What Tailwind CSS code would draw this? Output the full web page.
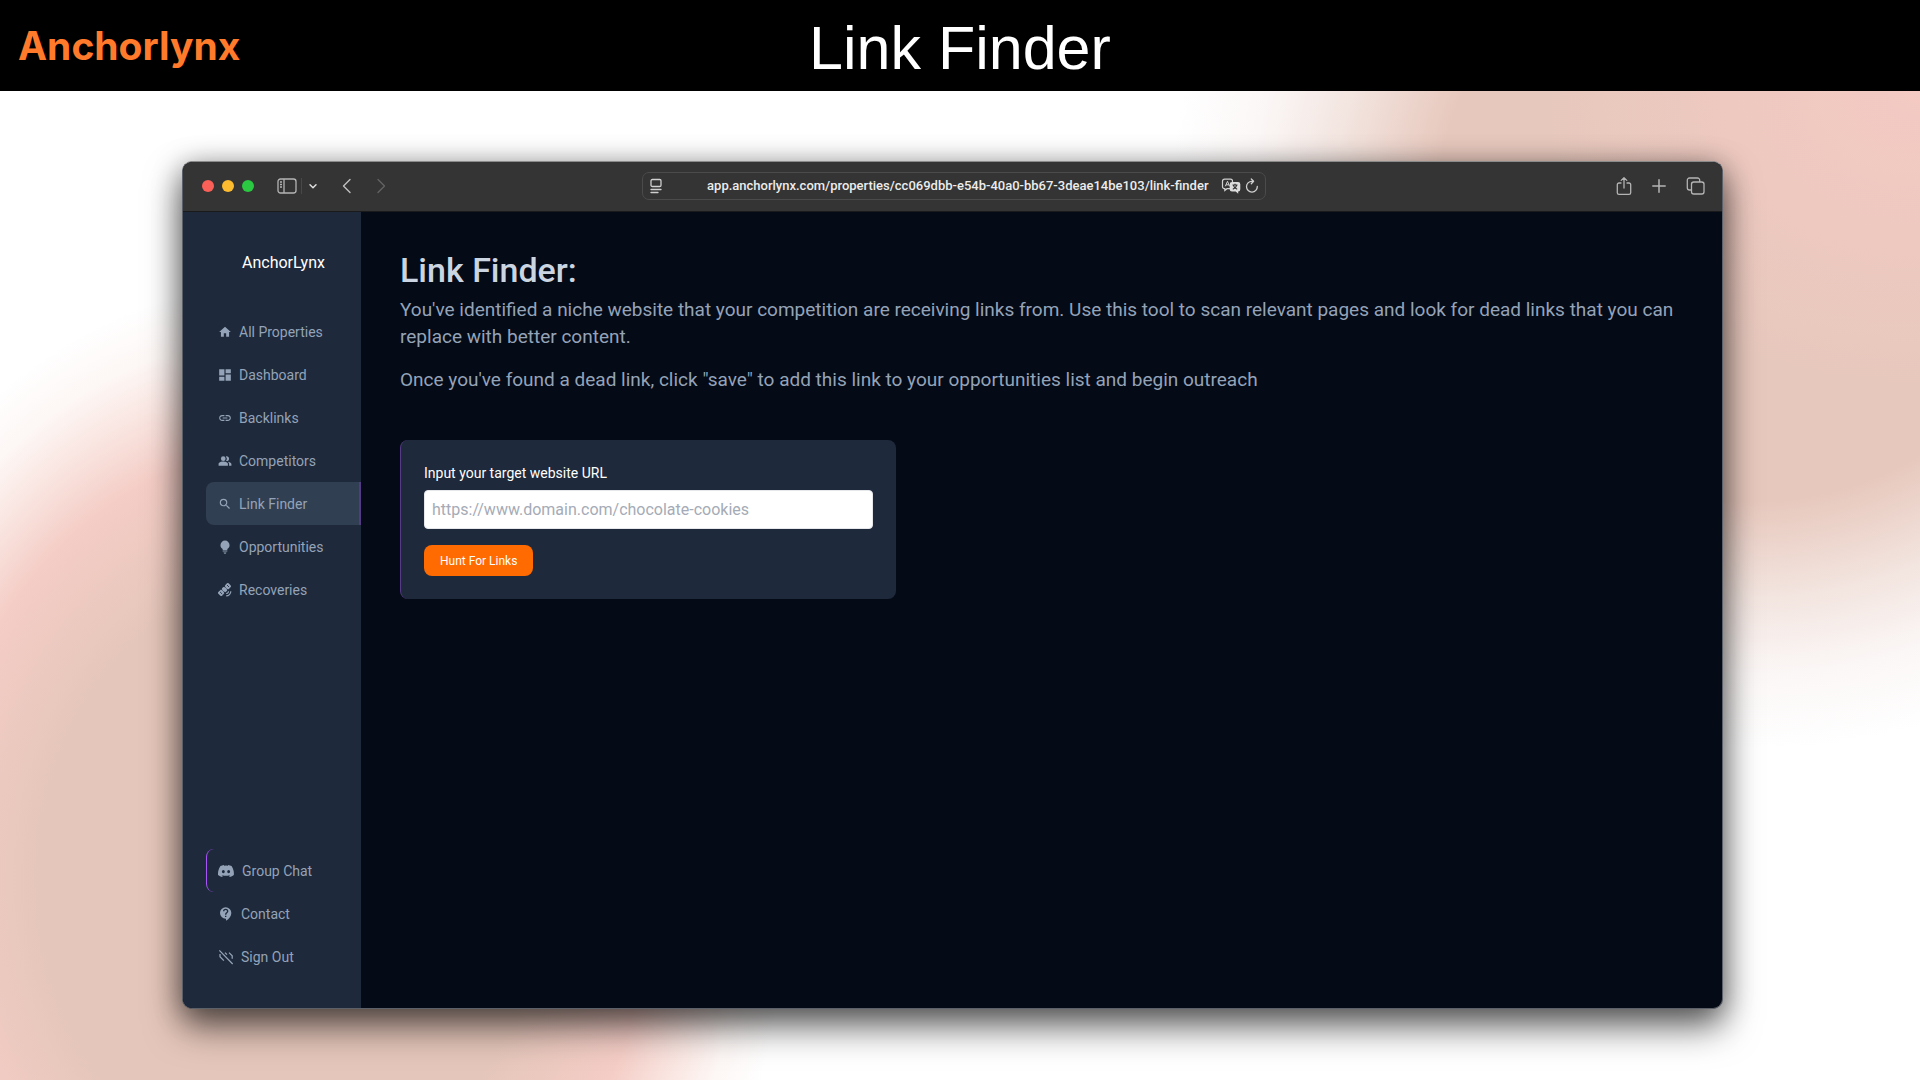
<!DOCTYPE html>
<html lang="en">
<head>
<meta charset="utf-8">
<meta name="viewport" content="width=device-width, initial-scale=1">
<title>Anchorlynx – Link Finder</title>
<script src="https://cdn.jsdelivr.net/npm/@tailwindcss/browser@4"></script>
</head>
<body class="flex min-h-screen flex-col bg-white font-['Roboto',sans-serif]">

<header class="grid h-[91px] grid-cols-[1fr_auto_1fr] items-center bg-black px-[18px]">
  <a href="#" class="font-['Inter',sans-serif] text-[39px] leading-[48px] font-bold text-[#ff7b2b]">Anchorlynx</a>
  <h1 class="pt-1 font-['Liberation_Sans',sans-serif] text-[61px] leading-[72px] text-white">Link Finder</h1>
</header>

<div class="flex flex-1 flex-col bg-[radial-gradient(ellipse_380px_300px_at_100%_0%,#f4cac3_0,#f4cac300_100%),radial-gradient(ellipse_580px_540px_at_1750px_119px,#e7c8bd_0,#e7c8bd_54%,#f3e5e0_72%,#fbf7f6_86%,#ffffff00_100%),radial-gradient(ellipse_500px_600px_at_290px_789px,#e5c6ba_0,#e5c6ba_50%,#f4cdc6_72%,#f9e2dd_81%,#fdf7f5_91%,#ffffff00_100%)] pt-[70px] pr-[197px] pb-[71px] pl-[182px]">
  <section class="flex flex-1 flex-col overflow-hidden rounded-[10px] border border-[#5c6068] border-t-[#8b8b8b] bg-[#040a16] shadow-[0_18px_36px_rgba(0,0,0,0.55),0_4px_28px_rgba(0,0,0,0.35)]">

    <!-- Browser toolbar -->
    <div class="flex h-[50px] shrink-0 items-center border-b border-[#1a1a1c] bg-[#343434] pr-[17px] pb-0.5 pl-[19px] text-[#b4b4b4]">
      <div class="flex flex-1 items-center">
        <div class="flex gap-2">
          <span class="size-3 rounded-full bg-[#fb6058]"></span>
          <span class="size-3 rounded-full bg-[#fdbc2f]"></span>
          <span class="size-3 rounded-full bg-[#2bc841]"></span>
        </div>
        <button type="button" aria-label="Show sidebar" class="ml-[23px]">
          <svg class="h-4 w-5" viewBox="0 0 20 16" fill="none" stroke="currentColor" stroke-width="1.3"><rect x="1" y="1" width="18" height="14" rx="2.5"/><path d="M7 1v14M3 4h2M3 6.500h2M3 9h2"/></svg>
        </button>
        <span class="ml-1 h-4 w-px bg-[#484848]"></span>
        <button type="button" aria-label="Tab groups" class="ml-1.5">
          <svg class="h-3 w-2.5" viewBox="0 0 10 12" fill="none" stroke="#dcdcdc" stroke-width="1.500" stroke-linecap="round" stroke-linejoin="round"><path d="M2 4.800l3 3 3-3"/></svg>
        </button>
        <button type="button" aria-label="Back" class="ml-[23px]">
          <svg class="h-4 w-3" viewBox="0 0 12 16" fill="none" stroke="#c0c0c0" stroke-width="1.400" stroke-linecap="round" stroke-linejoin="round"><path d="M9 1.500L2.500 8 9 14.500"/></svg>
        </button>
        <button type="button" aria-label="Forward" class="ml-[23px]">
          <svg class="h-4 w-3" viewBox="0 0 12 16" fill="none" stroke="#626262" stroke-width="1.400" stroke-linecap="round" stroke-linejoin="round"><path d="M2 1.500L8.500 8 2 14.500"/></svg>
        </button>
      </div>

      <div class="flex h-7 w-[624px] items-center rounded-[7px] border border-[#4b4b4b] px-1.5 text-[#d0d0d0]">
        <svg class="h-4 w-[14px] shrink-0" viewBox="0 0 14 16" fill="none" stroke="currentColor" stroke-width="1.300" stroke-linecap="round"><rect x="2" y="1.500" width="10" height="7" rx="1.300"/><path d="M2 11.500h10M2 14.500h7"/></svg>
        <input type="text" aria-label="Address" value="app.anchorlynx.com/properties/cc069dbb-e54b-40a0-bb67-3deae14be103/link-finder" class="min-w-0 flex-1 bg-transparent pr-3 text-right text-[13px] leading-5 font-medium text-[#ececec] outline-none">
        <button type="button" aria-label="Translate">
          <svg class="h-4 w-5" viewBox="0 0 20 16"><path d="M3.500 1.200h6a2 2 0 0 1 2 2v5.500a2 2 0 0 1-2 2H6l-2.200 1.800v-1.800h-.3a2 2 0 0 1-2-2V3.200a2 2 0 0 1 2-2z" fill="none" stroke="#d0d0d0" stroke-width="1.200"/><path d="M4.300 8.300l2.200-5 2.100 5M5 6.800h3" fill="none" stroke="#d0d0d0"/><path d="M11 4h6a2.300 2.300 0 0 1 2.300 2.300v5a2.300 2.300 0 0 1-2.100 2.300v2.100l-2.500-2.100H11a2.300 2.300 0 0 1-2.300-2.300v-5A2.300 2.300 0 0 1 11 4z" fill="#dcdcdc"/><path d="M11.500 7h5M14 5.800V7M15.800 7c-.5 2-2 3.500-4 4.300M12.300 7.200c.5 2 1.800 3.400 3.900 4.100" fill="none" stroke="#343434" stroke-width="1.100"/></svg>
        </button>
        <button type="button" aria-label="Reload" class="ml-1">
          <svg class="h-4 w-[14px]" viewBox="0 0 14 16" fill="none" stroke="currentColor" stroke-width="1.300" stroke-linecap="round" stroke-linejoin="round"><path d="M12.300 8.500a5.400 5.400 0 1 1-5.400-5.200h1.300M6.300 1l2.300 2.300-2.300 2.400"/></svg>
        </button>
      </div>

      <div class="flex flex-1 items-center justify-end gap-[19px]">
        <button type="button" aria-label="Share"><svg class="h-5 w-4" viewBox="0 0 16 20" fill="none" stroke="currentColor" stroke-width="1.300" stroke-linecap="round" stroke-linejoin="round"><path d="M5 7H3a1.700 1.700 0 0 0-1.700 1.700v8A1.700 1.700 0 0 0 3 18.400h10a1.700 1.700 0 0 0 1.700-1.700v-8A1.700 1.700 0 0 0 13 7h-2M8 12V1.800M5.200 4.400L8 1.600l2.800 2.800"/></svg></button>
        <button type="button" aria-label="New tab"><svg class="size-4" viewBox="0 0 16 16" fill="none" stroke="currentColor" stroke-width="1.500" stroke-linecap="round"><path d="M8 1.800v12.400M1.800 8h12.400"/></svg></button>
        <button type="button" aria-label="Tab overview"><svg class="h-5 w-[19px]" viewBox="0 0 19 20" fill="none" stroke="currentColor" stroke-width="1.300"><rect x="5.500" y="6" width="12.500" height="12" rx="2.200"/><path d="M5.500 14H3.500A2.200 2.200 0 0 1 1.300 11.800V4.200A2.200 2.200 0 0 1 3.500 2h8a2.200 2.200 0 0 1 2.200 2.200V6"/></svg></button>
      </div>
    </div>

    <div class="flex flex-1">
      <!-- Sidebar -->
      <aside class="flex w-[178px] shrink-0 flex-col bg-[#1e293b] pt-[39px] pb-[30px] text-sm text-[#94a3b8]">
        <a href="#" class="pl-[59px] text-base leading-6 text-white">AnchorLynx</a>
        <nav aria-label="Main" class="mt-[35px] flex flex-col pl-[23px]">
          <a href="#" class="flex h-[43px] items-center gap-[7px] pl-3">
            <svg class="size-[14px]" viewBox="0 0 24 24" fill="currentColor"><path d="M10 20v-6h4v6h5v-8h3L12 3 2 12h3v8z"/></svg>All Properties</a>
          <a href="#" class="flex h-[43px] items-center gap-[7px] pl-3">
            <svg class="size-[14px]" viewBox="0 0 24 24" fill="currentColor"><path d="M2 13h9V2H2v11zm0 9h9v-7H2v7zm11 0h9V11h-9v11zm0-20v7h9V2h-9z"/></svg>Dashboard</a>
          <a href="#" class="flex h-[43px] items-center gap-[7px] pl-3">
            <svg class="size-[14px]" viewBox="0 0 24 24" fill="currentColor"><path d="M3.900 12c0-1.710 1.390-3.100 3.100-3.100h4V7H7c-2.760 0-5 2.240-5 5s2.240 5 5 5h4v-1.900H7c-1.710 0-3.100-1.390-3.100-3.100zM8 13h8v-2H8v2zm9-6h-4v1.900h4c1.710 0 3.100 1.390 3.100 3.100s-1.390 3.100-3.100 3.100h-4V17h4c2.760 0 5-2.240 5-5s-2.240-5-5-5z"/></svg>Backlinks</a>
          <a href="#" class="flex h-[43px] items-center gap-[7px] pl-3">
            <svg class="size-[14px]" viewBox="0 0 24 24" fill="currentColor"><path d="M16.670 13.130C18.040 14.060 19 15.320 19 17v3h4v-3c0-2.180-3.570-3.470-6.330-3.870z"/><circle cx="9" cy="8" r="4"/><path d="M15 12c2.210 0 4-1.790 4-4s-1.790-4-4-4c-.470 0-.910.100-1.330.240a5.980 5.980 0 0 1 0 7.520c.420.140.860.240 1.330.240zM9 13c-2.670 0-8 1.340-8 4v3h16v-3c0-2.660-5.330-4-8-4z"/></svg>Competitors</a>
          <a href="#" aria-current="page" class="flex h-[43px] items-center gap-[7px] rounded-l-lg border-r-2 border-[#553a86] bg-[#334155]/90 pl-3">
            <svg class="size-[14px]" viewBox="0 0 24 24" fill="currentColor"><path d="M15.500 14h-.790l-.280-.270A6.471 6.471 0 0 0 16 9.500 6.500 6.500 0 1 0 9.500 16c1.610 0 3.090-.590 4.230-1.570l.270.280v.790l5 4.990L20.490 19l-4.990-5zm-6 0C7.010 14 5 11.990 5 9.500S7.010 5 9.500 5 14 7.010 14 9.500 11.990 14 9.500 14z"/></svg>Link Finder</a>
          <a href="#" class="flex h-[43px] items-center gap-[7px] pl-3">
            <svg class="size-[14px]" viewBox="0 0 24 24" fill="currentColor"><path d="M12 1a7.800 7.800 0 0 0-7.800 7.800c0 3 1.600 5 3.800 6.500V18h8v-2.700c2.200-1.500 3.800-3.500 3.800-6.500A7.800 7.800 0 0 0 12 1zM8 19.500h8v1.200H8zM9.500 21.500h5A2.500 2.500 0 0 1 12 23.500a2.500 2.500 0 0 1-2.500-2z"/></svg>Opportunities</a>
          <a href="#" class="flex h-[43px] items-center gap-[7px] pl-3">
            <svg class="size-[14px]" viewBox="0 0 24 24" fill="currentColor"><path d="M21 14h2a9 9 0 0 1-9 9v-2c3.870 0 7-3.130 7-7zm-7 3v2c2.760 0 5-2.240 5-5h-2c0 1.660-1.340 3-3 3zM18.260.590l3.540 3.540c.780.780.780 2.050 0 2.830l-3.180 3.180c-.780.780-2.050.780-2.830 0l-1.240-1.240-.710.700 1.240 1.240c.780.780.780 2.050 0 2.830l-1.410 1.410c-.780.780-2.050.780-2.830 0L9.600 13.840l-.710.710 1.240 1.240c.780.780.780 2.050 0 2.830L6.950 21.800c-.780.780-2.050.780-2.830 0L.580 18.260c-.780-.780-.780-2.050 0-2.830l3.180-3.180c.780-.780 2.050-.780 2.830 0l1.240 1.240.710-.710L7.300 11.540c-.780-.780-.780-2.050 0-2.830L8.720 7.300c.780-.780 2.050-.780 2.830 0l1.240 1.240.710-.710-1.240-1.240c-.780-.780-.780-2.050 0-2.830L15.430.580a2.010 2.010 0 0 1 2.830.010z"/><path d="M3.500 15.300l3.600 3.600M15.400 3.400L19 7" stroke="#1e293b" stroke-width="1.500"/></svg>Recoveries</a>
        </nav>
        <nav aria-label="Support" class="mt-auto flex flex-col pl-[23px]">
          <a href="#" class="flex h-[43px] items-center gap-2 rounded-l-lg border-l border-[#a855f7] pl-[11px]">
            <svg class="size-4" viewBox="0 0 24 24" fill="currentColor"><path d="M20.317 4.370a19.790 19.790 0 0 0-4.885-1.515c-.211.375-.457.880-.627 1.280a18.270 18.270 0 0 0-5.487 0c-.170-.400-.420-.905-.633-1.280A19.740 19.740 0 0 0 3.677 4.370C.533 9.046-.320 13.580.100 18.058a19.900 19.900 0 0 0 5.993 3.030c.485-.660.916-1.362 1.226-1.994a13.100 13.100 0 0 1-1.872-.892l.450-.350c3.928 1.793 8.180 1.793 12.062 0l.450.350c-.600.350-1.220.645-1.873.892.360.700.773 1.364 1.225 1.994a19.840 19.840 0 0 0 6.002-3.030c.500-5.177-.838-9.674-3.446-13.688zM8.020 15.330c-1.183 0-2.157-1.085-2.157-2.419s.955-2.419 2.157-2.419c1.210 0 2.176 1.095 2.157 2.419 0 1.334-.956 2.419-2.157 2.419zm7.975 0c-1.183 0-2.157-1.085-2.157-2.419s.955-2.419 2.157-2.419c1.210 0 2.176 1.095 2.157 2.419 0 1.334-.946 2.419-2.157 2.419z"/></svg>Group Chat</a>
          <a href="#" class="flex h-[43px] items-center gap-[7px] pl-3">
            <svg class="size-4" viewBox="0 0 24 24" fill="currentColor"><path fill-rule="evenodd" d="M11.500 2a8.500 8.500 0 0 0 0 17h.5v3c4.860-2.340 8-7 8-11.500A8.500 8.500 0 0 0 11.500 2zm1 14.500h-2v-2h2zm0-3.500h-2c0-3.250 3-3 3-5a2 2 0 1 0-4 0h-2a4 4 0 1 1 8 0c0 2.500-3 2.750-3 5z"/></svg>Contact</a>
          <a href="#" class="flex h-[43px] items-center gap-[7px] pl-3">
            <svg class="size-4" viewBox="0 0 24 24" fill="none" stroke="currentColor" stroke-width="1.900"><path d="M2 2l20 20.500M3 7.500v4.200l5.800 5.800M10.500 5.500l3 3M16.500 5.500l4.800 4.800v4.200"/></svg>Sign Out</a>
        </nav>
      </aside>

      <!-- Content -->
      <main class="min-w-0 flex-1 px-[39px] pt-[38px]">
        <h2 class="text-[34px] leading-10 font-medium text-[#cbd5e1]">Link Finder:</h2>
        <div class="mt-1.5 space-y-4 text-[19px] leading-[27px] text-[#94a3b8]">
          <p>You've identified a niche website that your competition are receiving links from. Use this tool to scan relevant pages and look for dead links that you can replace with better content.</p>
          <p>Once you've found a dead link, click "save" to add this link to your opportunities list and begin outreach</p>
        </div>
        <form class="mt-[47px] flex w-full max-w-[496px] flex-col items-start rounded-lg border-l border-[#553a86] bg-[#1e293b] px-[23px] py-[23px]">
          <label for="target-url" class="text-sm leading-5 text-white">Input your target website URL</label>
          <input id="target-url" type="url" placeholder="https://www.domain.com/chocolate-cookies" class="mt-[7px] h-[39px] w-full rounded border border-[#e5e7eb] bg-white px-[7px] text-base text-gray-900 placeholder:text-[#a5abb6]">
          <button type="button" class="mt-4 h-[31px] rounded-lg bg-[#ff6b00] px-4 text-xs text-white">Hunt For Links</button>
        </form>
      </main>
    </div>
  </section>
</div>
</body>
</html>
